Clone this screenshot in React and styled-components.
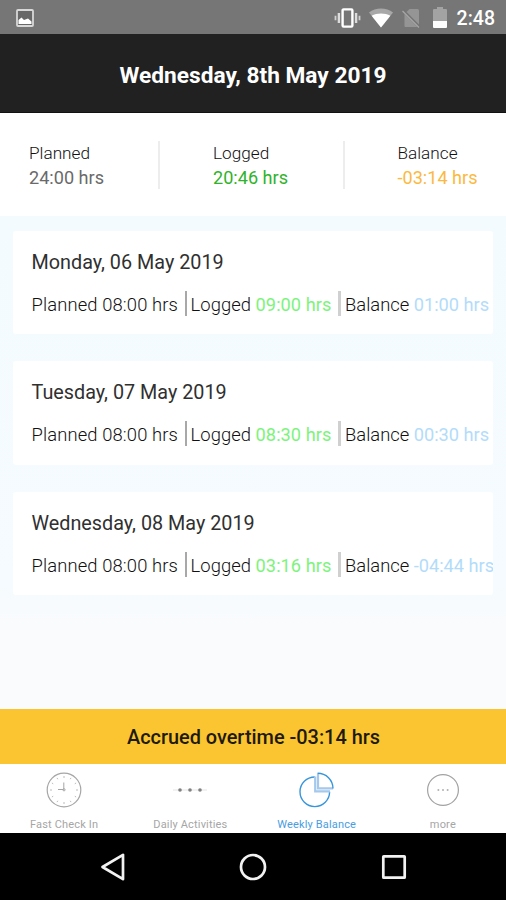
import React from "react";
import styled, { createGlobalStyle } from "styled-components";

const summary = [
  { label: "Planned", value: "24:00 hrs", color: "#6a6a6a" },
  { label: "Logged", value: "20:46 hrs", color: "#2fb32b" },
  { label: "Balance", value: "-03:14 hrs", color: "#fbb93f" },
];

const days = [
  { date: "Monday, 06 May 2019", logged: "09:00 hrs", balance: "01:00 hrs" },
  { date: "Tuesday, 07 May 2019", logged: "08:30 hrs", balance: "00:30 hrs" },
  { date: "Wednesday, 08 May 2019", logged: "03:16 hrs", balance: "-04:44 hrs" },
];

const ClockIcon = () => (
  <svg width="36" height="36" viewBox="0 0 36 36" fill="none" stroke="#a6a6a6">
    <circle cx="18" cy="18" r="16.8" strokeWidth="1.2" />
    <path d="M17.8 10.5V17.5M12 17.5H17.5" strokeWidth="1" />
    <circle cx="18" cy="17.8" r="1.1" strokeWidth="1" />
    <path
      d="M18 4V6M18 30V32M4 18H6M30 18H32M25 5.9L24.2 7.2M11 5.9L11.8 7.2M30.1 11L28.8 11.8M5.9 11L7.2 11.8M30.1 25L28.8 24.2M5.9 25L7.2 24.2M25 30.1L24.2 28.8M11 30.1L11.8 28.8"
      stroke="#bcbcbc"
      strokeWidth="1"
    />
  </svg>
);

const DotsIcon = () => (
  <svg width="36" height="36" viewBox="0 0 36 36" fill="#808080">
    <path d="M1 18H35" stroke="#ddd" strokeWidth="0.8" />
    <circle cx="8" cy="18" r="1.8" />
    <circle cx="18" cy="18" r="1.8" />
    <circle cx="28" cy="18" r="1.8" />
  </svg>
);

const PieIcon = () => (
  <svg width="36" height="36" viewBox="0 0 36 36" fill="none" stroke="#3795dc">
    <path d="M15.8 5A14.8 14.8 0 1 0 30.6 19.8" strokeWidth="1.4" />
    <path d="M16.2 4.5V19.3H31" stroke="#a5c8ed" strokeWidth="2.2" />
    <path d="M19 1.5V16.4H34" stroke="#a5c8ed" strokeWidth="2.2" />
    <path d="M18.6 1.3C27.2 1.3 34 8 34 16.6" strokeWidth="1.4" />
  </svg>
);

const MoreIcon = () => (
  <svg width="36" height="36" viewBox="0 0 36 36" fill="#b0b0b0">
    <circle cx="18" cy="18" r="15.4" fill="none" stroke="#a2a2a2" strokeWidth="1.2" />
    <circle cx="13.4" cy="18" r="1" />
    <circle cx="18" cy="18" r="1" />
    <circle cx="22.6" cy="18" r="1" />
  </svg>
);

const tabs = [
  { name: "Fast Check In", Icon: ClockIcon },
  { name: "Daily Activities", Icon: DotsIcon },
  { name: "Weekly Balance", Icon: PieIcon, active: true },
  { name: "more", Icon: MoreIcon },
];

const App = () => {
  return (
    <Screen>
      <GlobalStyle />
      <StatusBar>
        <svg width="18" height="18" viewBox="0 0 18 18">
          <rect x="1" y="1" width="16" height="16" rx="1" fill="#686868" stroke="#d8d8d8" strokeWidth="1.8" />
          <path d="M2.5 15V11L5.5 8.5L8 11L12 9.5L15.5 12.5V15Z" fill="#fff" />
        </svg>
        <StatusIcons>
          <svg width="27" height="20" viewBox="0 0 27 20" fill="none" stroke="#fff">
            <rect x="8.6" y="1.4" width="9.8" height="17.2" rx="1" strokeWidth="2.4" />
            <path d="M4.9 5V15M22.1 5V15" stroke="#dcdcdc" strokeWidth="2.4" />
            <path d="M1.5 7.8V12.2M25.5 7.8V12.2" stroke="#d0d0d0" strokeWidth="1.8" />
          </svg>
          <svg width="24" height="20" viewBox="0 0 24 20">
            <path d="M0 4.5C6.5 -0.7 17.5 -0.7 24 4.5L12 19.5Z" fill="#a8a8a8" />
            <path d="M2.6 7.8C8 4.6 16 4.6 21.4 7.8L12 19.5Z" fill="#fff" />
          </svg>
          <svg width="19" height="20" viewBox="0 0 19 20">
            <path d="M7.5 1H15.5Q17 1 17 2.5V19H3.5Q2.5 19 2.5 18V6Z" fill="#959595" />
            <path d="M1 2.5L18 19.5" stroke="#747474" strokeWidth="3" />
            <path d="M0.5 3L17 19.5" stroke="#a8a8a8" strokeWidth="1.3" />
          </svg>
        </StatusIcons>
        <svg width="14" height="21" viewBox="0 0 14 21">
          <path d="M4 0H10V2H13Q14 2 14 3V14H0V3Q0 2 1 2H4Z" fill="#a3a3a3" />
          <path d="M0 14H14V20Q14 21 13 21H1Q0 21 0 20Z" fill="#fff" />
        </svg>
        <Time>2:48</Time>
      </StatusBar>

      <Header>Wednesday, 8th May 2019</Header>

      <Summary>
        {summary.map((item) => (
          <SummaryItem key={item.label}>
            <p>{item.label}</p>
            <SummaryValue $color={item.color}>{item.value}</SummaryValue>
          </SummaryItem>
        ))}
      </Summary>

      <DayList>
        {days.map((day) => (
          <DayCard key={day.date}>
            <h3>{day.date}</h3>
            <Details>
              <Cell $width="153px" $spacing="0.12px">
                Planned 08:00 hrs
              </Cell>
              <Cell $width="153.5px" $line="2px solid #a8a8a8" $spacing="0.06px">
                Logged <Value $color="#7df37d">{day.logged}</Value>
              </Cell>
              <Cell $line="3px solid #d0d0d0">
                Balance <Value $color="#b3dcfa">{day.balance}</Value>
              </Cell>
            </Details>
          </DayCard>
        ))}
      </DayList>

      <Overtime>Accrued overtime -03:14 hrs</Overtime>

      <TabBar>
        {tabs.map(({ name, Icon, active }) => (
          <Tab key={name} $active={active}>
            <Icon />
            <span>{name}</span>
          </Tab>
        ))}
      </TabBar>

      <NavBar>
        <svg width="28" height="28" viewBox="0 0 28 28">
          <path d="M3.5 14L24 1.8V26.2Z" />
        </svg>
        <svg width="28" height="28" viewBox="0 0 28 28">
          <circle cx="14" cy="14" r="12" />
        </svg>
        <svg width="28" height="28" viewBox="0 0 28 28">
          <rect x="3.3" y="3.3" width="21.4" height="21.4" rx="0.5" />
        </svg>
      </NavBar>
    </Screen>
  );
};

const GlobalStyle = createGlobalStyle`
  * {
    box-sizing: border-box;
    margin: 0;
    padding: 0;
  }
  body {
    font-family: Roboto, sans-serif;
    background-color: #000;
  }
  svg {
    display: block;
    flex-shrink: 0;
  }
`;

const Screen = styled.div`
  width: 506px;
  height: 900px;
  display: flex;
  flex-direction: column;
  overflow: hidden;
`;

const StatusBar = styled.div`
  height: 34px;
  display: flex;
  align-items: center;
  padding: 1px 11px 0 16px;
  background-color: #767676;
`;

const StatusIcons = styled.div`
  display: flex;
  align-items: center;
  gap: 8.5px;
  margin: 0 12px 0 auto;
`;

const Time = styled.span`
  margin-left: 10px;
  padding-top: 1px;
  font-size: 19.5px;
  font-weight: 500;
  color: #fff;
`;

const Header = styled.h1`
  height: 79px;
  display: flex;
  align-items: center;
  justify-content: center;
  padding-top: 4px;
  font-size: 22.7px;
  font-weight: 700;
  color: #fff;
  background-color: #212121;
  border-bottom: 1px solid #111;
`;

const Summary = styled.div`
  height: 103px;
  display: grid;
  grid-template-columns: 160px 184.5px 1fr;
  padding-top: 28px;
  background-color: #fff;
`;

const SummaryItem = styled.div`
  height: 48px;
  padding: 0 0 0 53px;
  font-size: 17.2px;
  font-weight: 300;
  line-height: 24px;
  color: #111;
  border-right: 2px solid #ededed;
  &:first-child {
    padding-left: 29px;
  }
  &:last-child {
    border-right: none;
  }
`;

const SummaryValue = styled.p`
  padding-top: 1px;
  font-size: 18.1px;
  font-weight: 400;
  white-space: nowrap;
  color: ${(props) => props.$color};
`;

const DayList = styled.div`
  flex: 1;
  display: flex;
  flex-direction: column;
  gap: 27px;
  padding: 15px 13px 0;
  background: linear-gradient(#f4fbfe, #f5fbfe 75%, #f9fbfd 82%);
`;

const DayCard = styled.div`
  height: 103.3px;
  padding: 19px 0 0 18.5px;
  overflow: hidden;
  border-radius: 3px;
  background-color: #fff;
  h3 {
    font-size: 19.8px;
    font-weight: 400;
    line-height: 26px;
    color: #303030;
  }
`;

const Details = styled.div`
  display: flex;
  margin-top: 15px;
`;

const Cell = styled.div`
  flex-shrink: 0;
  width: ${(props) => props.$width || "auto"};
  height: 25px;
  padding-left: ${(props) => (props.$line ? "4px" : "0")};
  border-left: ${(props) => props.$line || "none"};
  font-size: 18.4px;
  font-weight: 300;
  line-height: 27px;
  letter-spacing: ${(props) => props.$spacing || "normal"};
  white-space: nowrap;
  color: #111;
`;

const Value = styled.span`
  font-weight: 400;
  font-size: 18.2px;
  color: ${(props) => props.$color};
`;

const Overtime = styled.div`
  height: 55px;
  display: flex;
  align-items: center;
  justify-content: center;
  padding: 2px 0 0 1px;
  font-size: 19.9px;
  font-weight: 500;
  color: #1e1a0c;
  background-color: #fbc531;
`;

const TabBar = styled.div`
  height: 69px;
  display: grid;
  grid-template-columns: repeat(4, 1fr);
  padding-left: 1px;
  background-color: #fff;
`;

const Tab = styled.div`
  display: flex;
  flex-direction: column;
  align-items: center;
  padding-top: 8px;
  font-size: 11px;
  line-height: 14px;
  letter-spacing: 0.16px;
  color: ${(props) => (props.$active ? "#4a9de0" : "#a6a6a6")};
  span {
    margin-top: 10px;
  }
`;

const NavBar = styled.div`
  height: 67px;
  display: flex;
  align-items: center;
  justify-content: center;
  gap: 112.5px;
  background-color: #000;
  svg {
    fill: none;
    stroke: #f2f2f2;
    stroke-width: 2.7;
    stroke-linejoin: round;
  }
`;

export default App;
